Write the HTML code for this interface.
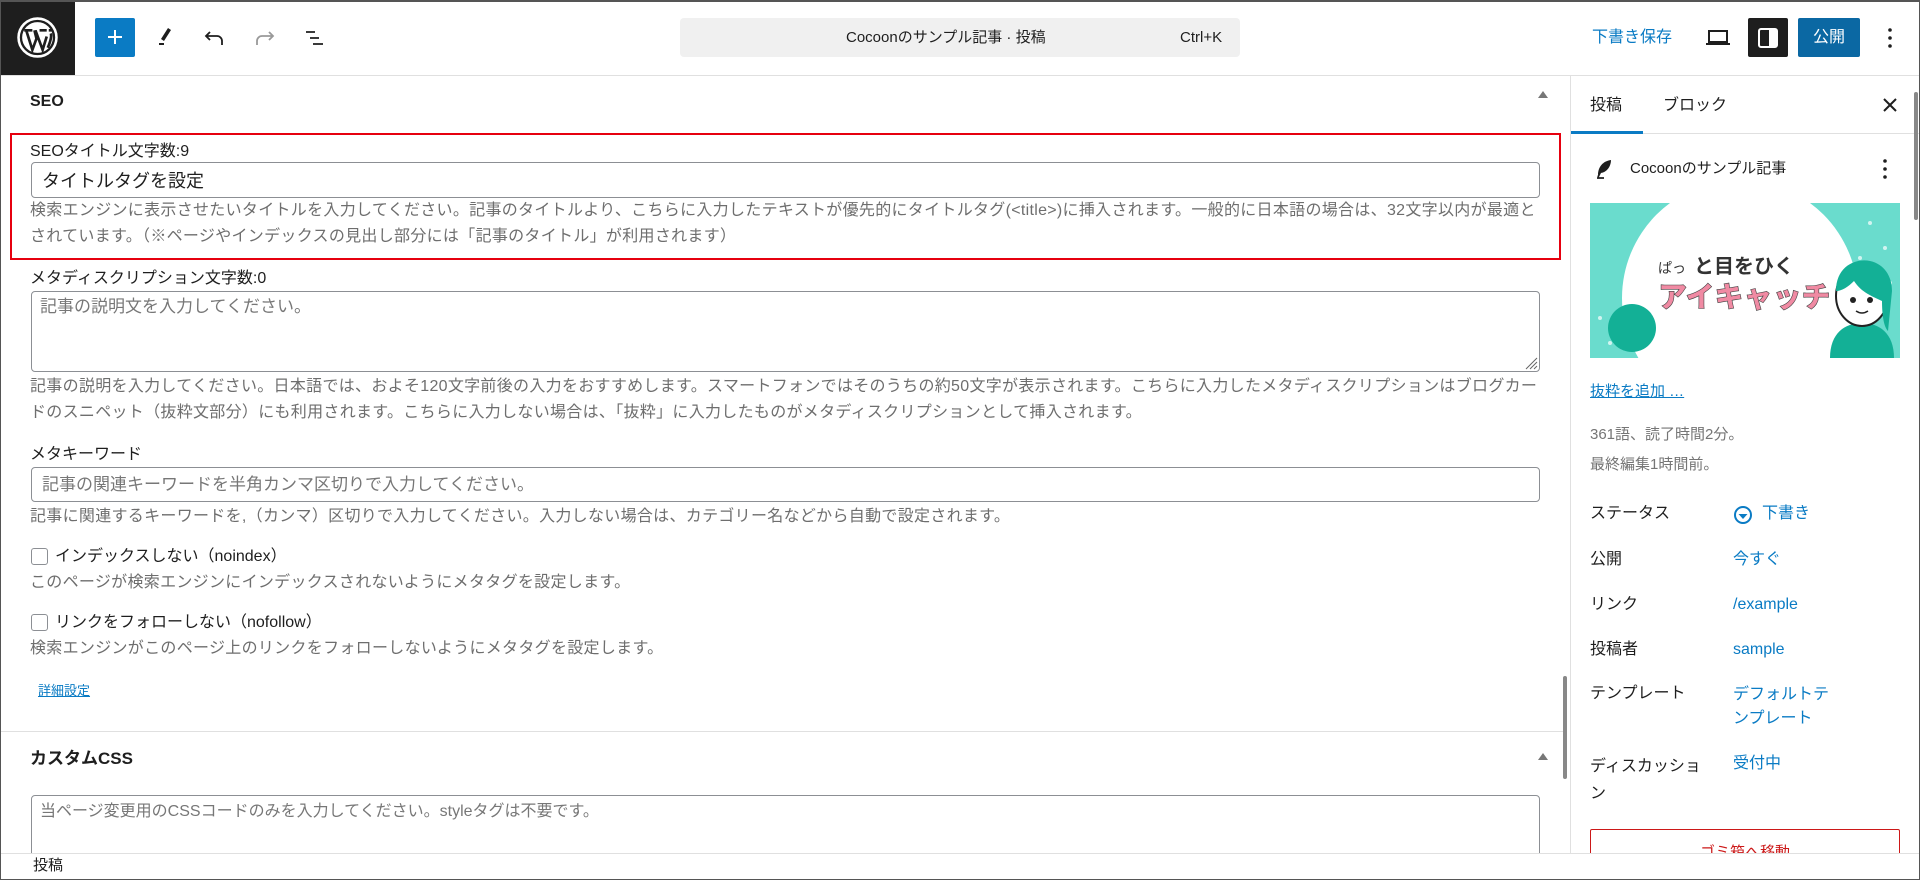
<!DOCTYPE html>
<html><head><meta charset="utf-8">
<style>
*{margin:0;padding:0;box-sizing:border-box}
body{width:1920px;height:880px;overflow:hidden;background:#fff;font-family:"Liberation Sans","Noto Sans CJK JP",sans-serif;color:#1e1e1e;position:relative}
.a{position:absolute;white-space:nowrap}
.lbl{font-size:16px;line-height:20px;color:#1e1e1e}
.help{font-size:16px;line-height:25.5px;color:#6e6e6e;white-space:normal;letter-spacing:0.3px}
.inp{position:absolute;border:1px solid #8c8f94;border-radius:4px;background:#fff}
.ph{color:#777;font-size:17px}
.blue{color:#0a7bc4}
.row{font-size:16px;line-height:22px}
</style></head><body>
<div class="a" style="left:0;top:0;width:1920px;height:880px;border:1px solid #555;border-top-width:2px;z-index:50;pointer-events:none"></div>

<!-- header -->
<div class="a" style="left:0;top:0;width:1920px;height:76px;border-bottom:1px solid #e0e0e0;background:#fff"></div>
<div class="a" style="left:0;top:0;width:75px;height:75px;background:#1e1e1e"></div>
<svg class="a" style="left:17px;top:17px" width="41" height="41" viewBox="0 0 40 40"><circle cx="20" cy="20" r="18.5" fill="none" stroke="#fff" stroke-width="2.5"/><circle cx="20" cy="20" r="15" fill="#fff"/><path d="M7 13h8M22 13h7M31 13h3M9 13l6 19 4-11-2-8M18 13l7 19 4-13" stroke="#1e1e1e" stroke-width="2.6" fill="none"/><path d="M33 16c1 3 0 7-3 14" stroke="#1e1e1e" stroke-width="2.6" fill="none"/></svg>
<div class="a" style="left:95px;top:18px;width:40px;height:39px;background:#0a7bc4;border-radius:2px"></div>
<svg class="a" style="left:105px;top:27px" width="20" height="20"><path d="M10 3v14M3 10h14" stroke="#fff" stroke-width="2"/></svg>
<svg class="a" style="left:153px;top:25px" width="24" height="24" viewBox="0 0 24 24"><path d="M15 3l3 2-7 11-3-2z" fill="#1e1e1e"/><path d="M6 19h5" stroke="#1e1e1e" stroke-width="2"/></svg>
<svg class="a" style="left:203px;top:26px" width="24" height="24" viewBox="0 0 24 24"><path d="M7 6l-4 4 4 4M3 10h11a5 5 0 015 5v4" stroke="#1e1e1e" stroke-width="1.8" fill="none"/></svg>
<svg class="a" style="left:252px;top:26px" width="24" height="24" viewBox="0 0 24 24"><path d="M17 6l4 4-4 4M21 10H10a5 5 0 00-5 5v4" stroke="#999" stroke-width="1.8" fill="none"/></svg>
<svg class="a" style="left:303px;top:26px" width="24" height="24" viewBox="0 0 24 24"><path d="M3 6h9M7 12h9M10 18h10" stroke="#1e1e1e" stroke-width="1.8"/></svg>
<div class="a" style="left:680px;top:18px;width:560px;height:39px;background:#f0f0f0;border-radius:4px"></div>
<div class="a" style="left:846px;top:28px;font-size:15px;line-height:20px">Cocoonのサンプル記事 · 投稿</div>
<div class="a" style="left:1180px;top:28px;font-size:15px;line-height:20px">Ctrl+K</div>
<div class="a blue" style="left:1592px;top:27px;font-size:16px;line-height:22px">下書き保存</div>
<svg class="a" style="left:1705px;top:27px" width="26" height="22"><rect x="4" y="4" width="18" height="11" fill="none" stroke="#1e1e1e" stroke-width="2"/><path d="M1 17h24" stroke="#1e1e1e" stroke-width="2"/></svg>
<div class="a" style="left:1748px;top:18px;width:40px;height:39px;background:#1e1e1e;border-radius:2px"></div>
<svg class="a" style="left:1757px;top:27px" width="22" height="22"><rect x="2" y="2" width="18" height="18" rx="2" fill="none" stroke="#fff" stroke-width="2"/><rect x="12" y="3" width="7" height="16" fill="#fff"/></svg>
<div class="a" style="left:1798px;top:18px;width:62px;height:39px;background:#0b68a3;border-radius:2px;color:#fff;font-size:16px;line-height:39px;text-align:center">公開</div>
<svg class="a" style="left:1884px;top:27px" width="12" height="24"><circle cx="6" cy="3" r="1.8" fill="#1e1e1e"/><circle cx="6" cy="11" r="1.8" fill="#1e1e1e"/><circle cx="6" cy="19" r="1.8" fill="#1e1e1e"/></svg>

<!-- main panel -->
<div class="a" style="left:30px;top:92px;font-size:16px;font-weight:bold;line-height:20px">SEO</div>
<svg class="a" style="left:1537px;top:89px" width="12" height="10"><path d="M1 9L6 2l5 7z" fill="#777"/></svg>
<div class="a" style="left:10px;top:133px;width:1551px;height:127px;border:2px solid #e6000f"></div>
<div class="a lbl" style="left:30px;top:142px">SEOタイトル文字数:9</div>
<div class="inp" style="left:31px;top:162px;width:1509px;height:36px"></div>
<div class="a" style="left:42px;top:169px;font-size:18px;line-height:24px">タイトルタグを設定</div>
<div class="a help" style="left:30px;top:198px;width:1515px">検索エンジンに表示させたいタイトルを入力してください。記事のタイトルより、こちらに入力したテキストが優先的にタイトルタグ(&lt;title&gt;)に挿入されます。一般的に日本語の場合は、32文字以内が最適とされています。（※ページやインデックスの見出し部分には「記事のタイトル」が利用されます）</div>

<div class="a lbl" style="left:30px;top:269px">メタディスクリプション文字数:0</div>
<div class="inp" style="left:31px;top:291px;width:1509px;height:81px"></div>
<div class="a ph" style="left:40px;top:296px;line-height:22px">記事の説明文を入力してください。</div>
<svg class="a" style="left:1524px;top:356px" width="14" height="14"><path d="M2 13L13 2M6 13l7-7M10 13l3-3" stroke="#666" stroke-width="1"/></svg>
<div class="a help" style="left:30px;top:374px;width:1515px">記事の説明を入力してください。日本語では、およそ120文字前後の入力をおすすめします。スマートフォンではそのうちの約50文字が表示されます。こちらに入力したメタディスクリプションはブログカードのスニペット（抜粋文部分）にも利用されます。こちらに入力しない場合は、「抜粋」に入力したものがメタディスクリプションとして挿入されます。</div>

<div class="a lbl" style="left:30px;top:445px">メタキーワード</div>
<div class="inp" style="left:31px;top:467px;width:1509px;height:35px"></div>
<div class="a ph" style="left:42px;top:474px;line-height:22px">記事の関連キーワードを半角カンマ区切りで入力してください。</div>
<div class="a help" style="left:30px;top:504px">記事に関連するキーワードを,（カンマ）区切りで入力してください。入力しない場合は、カテゴリー名などから自動で設定されます。</div>

<div class="a" style="left:31px;top:548px;width:17px;height:17px;border:1px solid #8c8f94;border-radius:3px"></div>
<div class="a lbl" style="left:55px;top:547px;font-size:16px">インデックスしない（noindex）</div>
<div class="a help" style="left:30px;top:570px">このページが検索エンジンにインデックスされないようにメタタグを設定します。</div>
<div class="a" style="left:31px;top:614px;width:17px;height:17px;border:1px solid #8c8f94;border-radius:3px"></div>
<div class="a lbl" style="left:55px;top:613px;font-size:16px">リンクをフォローしない（nofollow）</div>
<div class="a help" style="left:30px;top:636px">検索エンジンがこのページ上のリンクをフォローしないようにメタタグを設定します。</div>
<div class="a blue" style="left:38px;top:682px;font-size:13px;line-height:18px;text-decoration:underline">詳細設定</div>

<div class="a" style="left:0;top:731px;width:1563px;height:1px;background:#e0e0e0"></div>
<div class="a" style="left:30px;top:748px;font-size:17px;font-weight:bold;line-height:22px">カスタムCSS</div>
<svg class="a" style="left:1537px;top:751px" width="12" height="10"><path d="M1 9L6 2l5 7z" fill="#777"/></svg>
<div class="inp" style="left:31px;top:795px;width:1509px;height:80px"></div>
<div class="a ph" style="left:40px;top:801px;line-height:22px;font-size:16px">当ページ変更用のCSSコードのみを入力してください。styleタグは不要です。</div>
<div class="a" style="left:1563px;top:676px;width:4px;height:103px;background:#888;border-radius:2px"></div>

<!-- sidebar -->
<div class="a" style="left:1570px;top:76px;width:1px;height:777px;background:#e0e0e0"></div>
<div class="a" style="left:1571px;top:76px;width:349px;height:777px;background:#fff"></div>
<div class="a" style="left:1590px;top:95px;font-size:16px;line-height:22px">投稿</div>
<div class="a" style="left:1663px;top:95px;font-size:16px;line-height:22px">ブロック</div>
<div class="a" style="left:1571px;top:133px;width:349px;height:1px;background:#e0e0e0"></div>
<div class="a" style="left:1571px;top:131px;width:72px;height:3px;background:#0a7bc4"></div>
<svg class="a" style="left:1881px;top:96px" width="18" height="18"><path d="M3 3l12 12M15 3L3 15" stroke="#1e1e1e" stroke-width="2"/></svg>
<div class="a" style="left:1914px;top:92px;width:4px;height:128px;background:#888;border-radius:2px"></div>
<svg class="a" style="left:1594px;top:157px" width="20" height="24" viewBox="0 0 20 24"><path d="M4 18C4 10 9 4 17 3c0 7-5 13-11 13z" fill="#1e1e1e"/><path d="M7 14l-3 6M3 21h7" stroke="#1e1e1e" stroke-width="1.8"/></svg>
<div class="a" style="left:1630px;top:158px;font-size:15px;line-height:22px">Cocoonのサンプル記事</div>
<svg class="a" style="left:1879px;top:158px" width="12" height="24"><circle cx="6" cy="3" r="1.8" fill="#1e1e1e"/><circle cx="6" cy="11" r="1.8" fill="#1e1e1e"/><circle cx="6" cy="19" r="1.8" fill="#1e1e1e"/></svg>

<svg class="a" style="left:1590px;top:203px" width="310" height="155" viewBox="0 0 310 155">
<defs><clipPath id="c"><rect width="310" height="155"/></clipPath></defs>
<g clip-path="url(#c)">
<rect width="310" height="155" fill="#6adccd"/>
<circle cx="150" cy="95" r="118" fill="#fff"/>
<circle cx="42" cy="125" r="24" fill="#13b096"/>
<g fill="#fff" opacity=".7"><circle cx="10" cy="115" r="2"/><circle cx="20" cy="140" r="2"/><circle cx="280" cy="20" r="2"/><circle cx="295" cy="45" r="2"/><circle cx="270" cy="55" r="2"/><circle cx="300" cy="80" r="2"/></g>
<text x="68" y="70" font-family="Noto Sans CJK JP" font-size="14" fill="#333">ぱっ</text>
<text x="104" y="70" font-family="Noto Sans CJK JP" font-size="20" font-weight="bold" fill="#333">と目をひく</text>
<text x="68" y="104" font-family="Noto Sans CJK JP" font-size="29" font-weight="900" fill="#f08aa3" stroke="#444" stroke-width=".6">アイキャッチ</text>
<path d="M240 155c0-25 15-35 32-35s32 10 32 35z" fill="#13b096"/>
<ellipse cx="272" cy="93" rx="26" ry="30" fill="#fff" stroke="#222" stroke-width="2"/>
<path d="M246 88c0-25 20-33 34-30 14 3 22 15 22 30l-4 40c-5-5-6-20-6-30-10-5-20-8-28-20-6 6-12 10-18 10z" fill="#13b096"/>
<circle cx="263" cy="97" r="3" fill="#222"/><circle cx="280" cy="97" r="3" fill="#222"/>
<path d="M266 108q6 4 12 0" stroke="#222" stroke-width="1.5" fill="none"/>
</g></svg>

<div class="a blue" style="left:1590px;top:381px;font-size:15px;line-height:22px;text-decoration:underline">抜粋を追加 …</div>
<div class="a" style="left:1590px;top:424px;font-size:15px;line-height:22px;color:#757575">361語、読了時間2分。</div>
<div class="a" style="left:1590px;top:454px;font-size:15px;line-height:22px;color:#757575">最終編集1時間前。</div>

<div class="a row" style="left:1590px;top:503px">ステータス</div>
<svg class="a" style="left:1733px;top:505px" width="20" height="20"><circle cx="10" cy="10" r="8" fill="none" stroke="#0a7bc4" stroke-width="2"/><path d="M5.5 9h9l-4.5 5z" fill="#0a7bc4"/></svg>
<div class="a row blue" style="left:1762px;top:503px">下書き</div>
<div class="a row" style="left:1590px;top:549px">公開</div>
<div class="a row blue" style="left:1733px;top:549px">今すぐ</div>
<div class="a row" style="left:1590px;top:594px">リンク</div>
<div class="a row blue" style="left:1733px;top:594px">/example</div>
<div class="a row" style="left:1590px;top:639px">投稿者</div>
<div class="a row blue" style="left:1733px;top:639px">sample</div>
<div class="a row" style="left:1590px;top:683px">テンプレート</div>
<div class="a row blue" style="left:1733px;top:683px;line-height:24px">デフォルトテ<br>ンプレート</div>
<div class="a row" style="left:1590px;top:753px;line-height:27px">ディスカッショ<br>ン</div>
<div class="a row blue" style="left:1733px;top:753px">受付中</div>
<div class="a" style="left:1590px;top:829px;width:310px;height:40px;border:1px solid #cc1818;border-radius:2px;color:#cc1818;font-size:15px;text-align:center;line-height:38px;padding-top:4px">ゴミ箱へ移動</div>

<!-- bottom bar -->
<div class="a" style="left:0;top:853px;width:1920px;height:27px;background:#fff;border-top:1px solid #e0e0e0"></div>
<div class="a" style="left:33px;top:856px;font-size:15px;line-height:20px">投稿</div>
</body></html>
